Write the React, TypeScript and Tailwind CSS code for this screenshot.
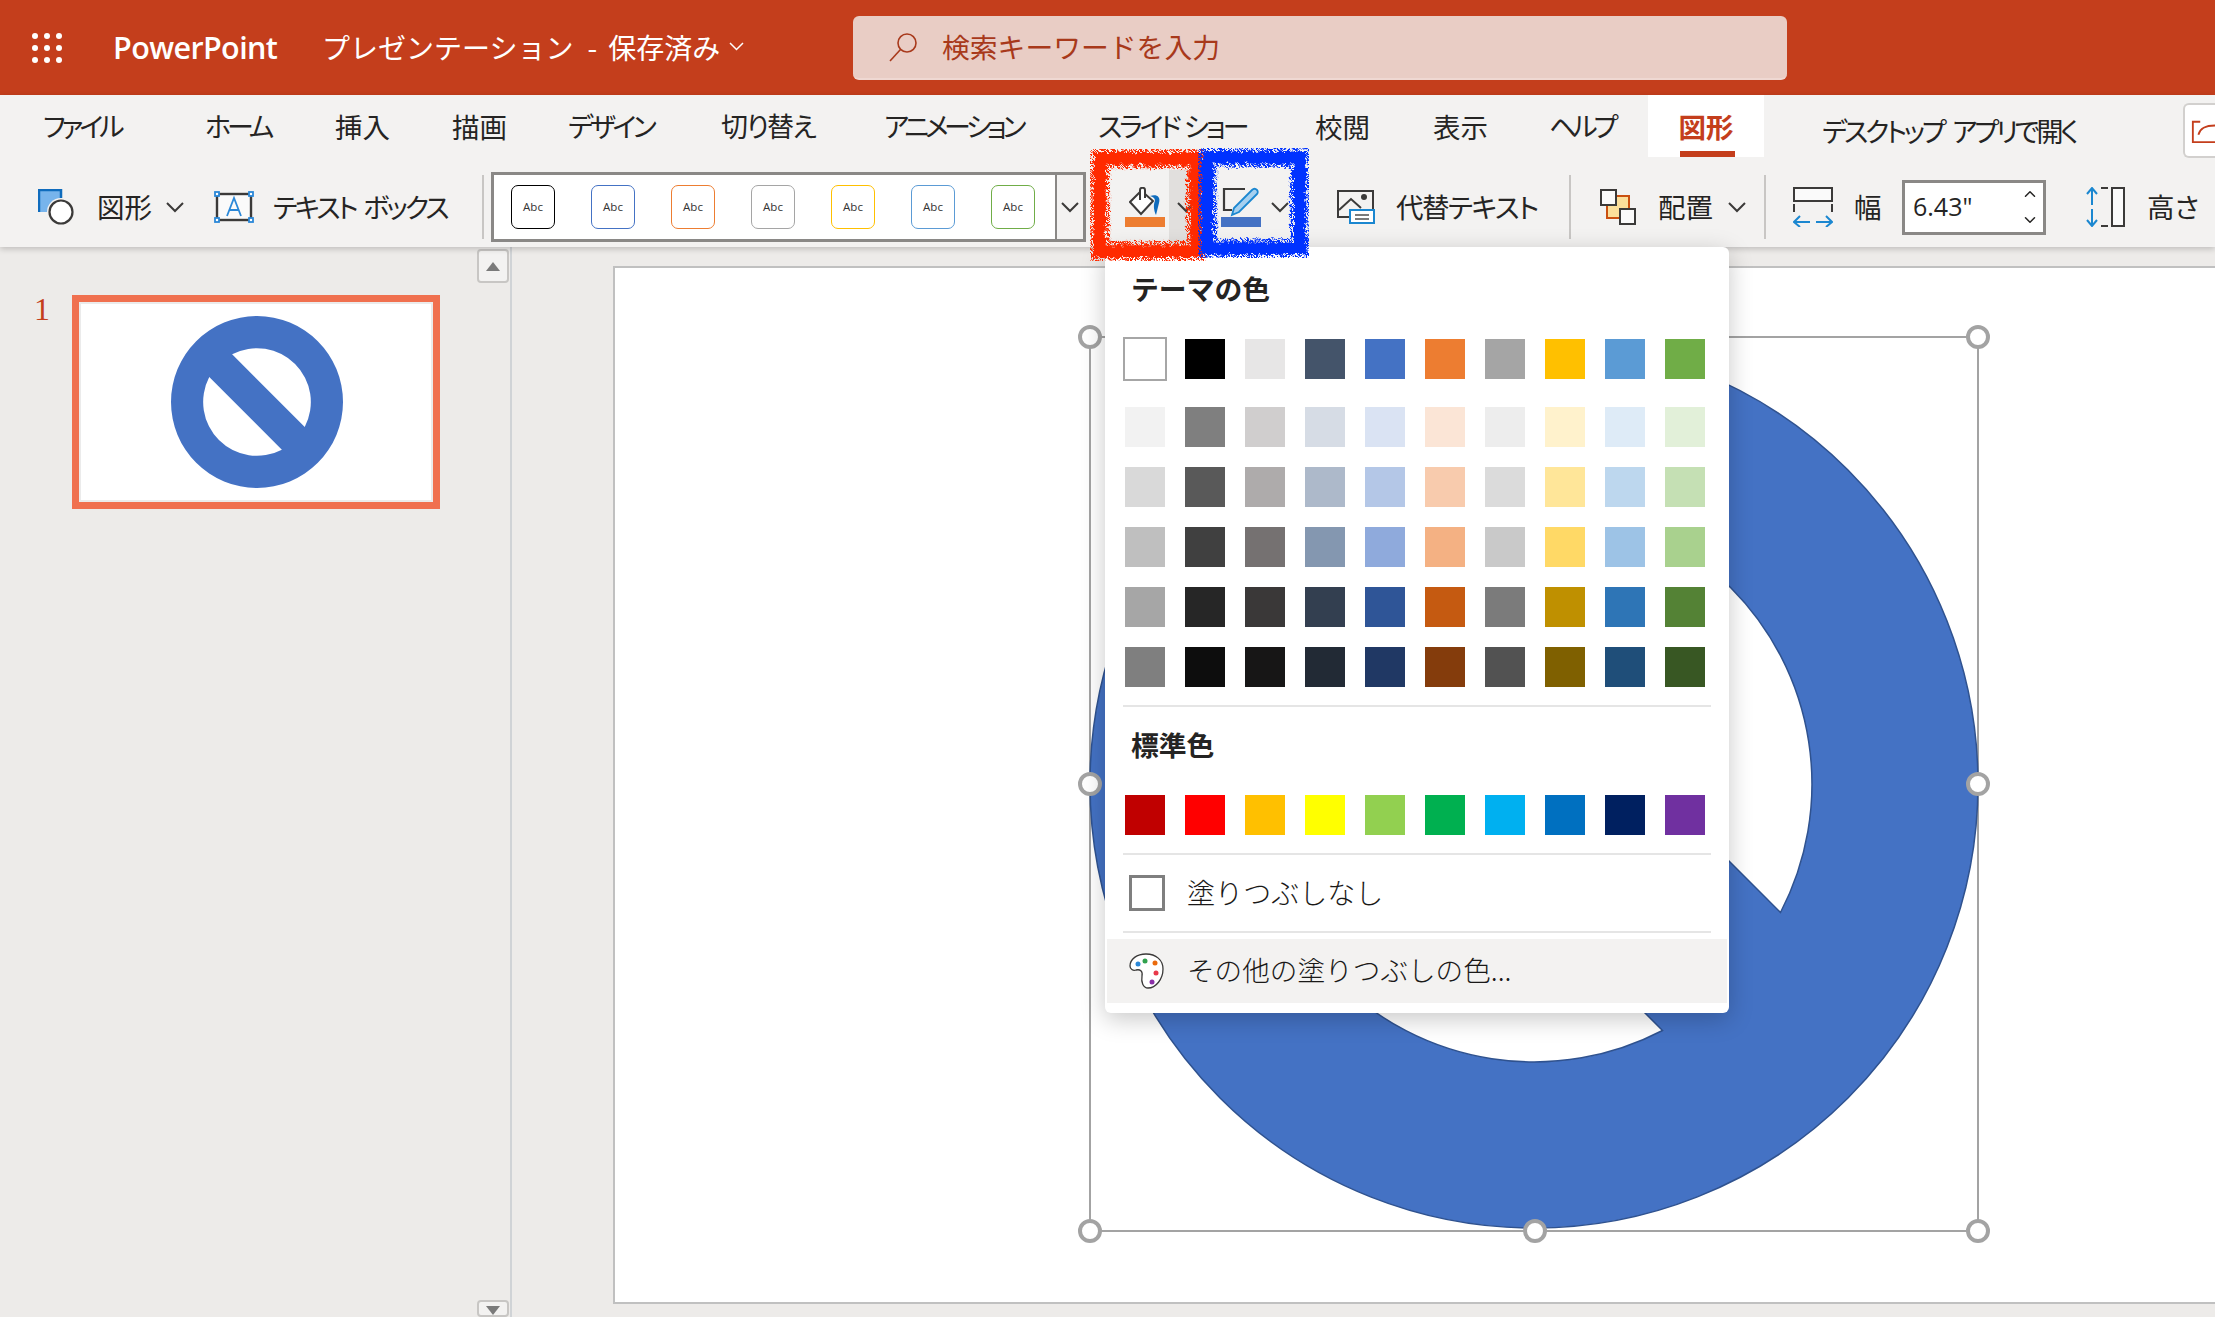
import { ChevronDown, ChevronUp } from "lucide-react";

const font = "font-['Noto_Sans_CJK_JP','Noto_Sans',sans-serif]";

const tabs = [
  { label: "ファイル", cls: "w-[162px] text-[27px] tracking-[-4px]" },
  { label: "ホーム", cls: "w-[130px] text-[27px] tracking-[-4px]" },
  { label: "挿入", cls: "w-[117px] text-[27.5px]" },
  { label: "描画", cls: "w-[116px] text-[27.5px]" },
  { label: "デザイン", cls: "w-[153px] text-[27px] tracking-[-3.4px]" },
  { label: "切り替え", cls: "w-[163px] text-[27px] tracking-[-1.7px]" },
  { label: "アニメーション", cls: "w-[214px] text-[27px] tracking-[-4.3px]" },
  { label: "スライド ショー", cls: "w-[217px] text-[27px] tracking-[-3px] [word-spacing:2px]" },
  { label: "校閲", cls: "w-[118px] text-[27.5px]" },
  { label: "表示", cls: "w-[116px] text-[27.5px]" },
  { label: "ヘルプ", cls: "w-[99px] text-[27px] tracking-[-4px]" },
];

const abcColors = [
  "border-black",
  "border-[#4472c4]",
  "border-[#ed7d31]",
  "border-[#a5a5a5]",
  "border-[#ffc000]",
  "border-[#5b9bd5]",
  "border-[#70ad47]",
];

const themeTop = [
  "bg-white",
  "bg-black",
  "bg-[#e7e6e6]",
  "bg-[#44546a]",
  "bg-[#4472c4]",
  "bg-[#ed7d31]",
  "bg-[#a5a5a5]",
  "bg-[#ffc000]",
  "bg-[#5b9bd5]",
  "bg-[#70ad47]",
];

const themeShades = [
  ["bg-[#f2f2f2]", "bg-[#7f7f7f]", "bg-[#d0cece]", "bg-[#d6dce5]", "bg-[#dae3f3]", "bg-[#fbe5d6]", "bg-[#ededed]", "bg-[#fff2cc]", "bg-[#deebf7]", "bg-[#e2f0d9]"],
  ["bg-[#d9d9d9]", "bg-[#595959]", "bg-[#aeabab]", "bg-[#adb9ca]", "bg-[#b4c7e7]", "bg-[#f8cbad]", "bg-[#dbdbdb]", "bg-[#ffe699]", "bg-[#bdd7ee]", "bg-[#c5e0b4]"],
  ["bg-[#bfbfbf]", "bg-[#404040]", "bg-[#757171]", "bg-[#8497b0]", "bg-[#8faadc]", "bg-[#f4b183]", "bg-[#c9c9c9]", "bg-[#ffd966]", "bg-[#9dc3e6]", "bg-[#a9d18e]"],
  ["bg-[#a6a6a6]", "bg-[#262626]", "bg-[#3a3838]", "bg-[#333f50]", "bg-[#2f5597]", "bg-[#c55a11]", "bg-[#7b7b7b]", "bg-[#bf9000]", "bg-[#2e75b6]", "bg-[#548235]"],
  ["bg-[#7f7f7f]", "bg-[#0d0d0d]", "bg-[#171616]", "bg-[#222a35]", "bg-[#203864]", "bg-[#843c0c]", "bg-[#525252]", "bg-[#7f6000]", "bg-[#1f4e79]", "bg-[#385723]"],
];

const standard = [
  "bg-[#c00000]",
  "bg-[#ff0000]",
  "bg-[#ffc000]",
  "bg-[#ffff00]",
  "bg-[#92d050]",
  "bg-[#00b050]",
  "bg-[#00b0f0]",
  "bg-[#0070c0]",
  "bg-[#002060]",
  "bg-[#7030a0]",
];

function Chevron({ className = "" }: { className?: string }) {
  return (
    <svg className={`h-[11px] w-[18px] shrink-0 ${className}`} viewBox="0 0 18 11" fill="none" stroke="#3b3a39" strokeWidth="2">
      <path d="M1 1l8 8 8-8" />
    </svg>
  );
}

function Swatches({ colors, first }: { colors: string[]; first?: boolean }) {
  return (
    <div className="flex gap-5">
      {colors.map((c, i) => (
        <div key={i} className={`h-10 w-10 ${c} ${first && i === 0 ? "outline-2 outline-[#a6a6a6]" : ""}`} />
      ))}
    </div>
  );
}

function NoSymbol() {
  return (
    <path
      fillRule="evenodd"
      d="M-444 0A444 444 0 1 1 444 0A444 444 0 1 1 -444 0ZM-128.5 -246.5A278 278 0 0 1 246.5 128.5ZM-246.5 -128.5A278 278 0 0 0 128.5 246.5Z"
    />
  );
}

// marker pen frame: a solid core plus a speckled, torn outer band
function Scribble({ className, color, id }: { className: string; color: string; id: string }) {
  return (
    <svg className={`absolute ${className}`} viewBox="0 0 120 116" preserveAspectRatio="none">
      <filter id={`${id}a`} x="-10%" y="-10%" width="120%" height="120%">
        <feTurbulence type="fractalNoise" baseFrequency="0.22" numOctaves="2" seed="4" />
        <feDisplacementMap in="SourceGraphic" scale="8" />
      </filter>
      <filter id={`${id}b`} x="-10%" y="-10%" width="120%" height="120%">
        <feTurbulence type="fractalNoise" baseFrequency="0.45" numOctaves="2" seed="9" result="n" />
        <feColorMatrix in="n" type="matrix" values="0 0 0 0 0 0 0 0 0 0 0 0 0 0 0 0 0 0 14 -6.4" result="m" />
        <feComposite in="SourceGraphic" in2="m" operator="in" result="s" />
        <feDisplacementMap in="s" in2="n" scale="6" />
      </filter>
      <rect x="11" y="11" width="98" height="94" fill="none" stroke={color} strokeWidth="21" filter={`url(#${id}b)`} />
      <rect x="11" y="11" width="98" height="94" fill="none" stroke={color} strokeWidth="12" filter={`url(#${id}a)`} />
    </svg>
  );
}

function Handle({ className }: { className: string }) {
  return <div className={`absolute h-[24px] w-[24px] rounded-full border-[4px] border-[#a3a3a3] bg-white ${className}`} />;
}

export default function App() {
  return (
    <div className={`relative flex h-[1317px] w-[2215px] flex-col overflow-hidden bg-[#edebe9] text-[#252423] ${font}`}>
      {/* title bar */}
      <header className="flex h-[95px] shrink-0 items-center bg-[#c43e1c] text-white">
        <div className="ml-[32px] grid w-[30px] grid-cols-3 gap-x-[6px] gap-y-[6px]">
          {Array.from({ length: 9 }).map((_, i) => (
            <span key={i} className="h-[6px] w-[6px] rounded-full bg-white" />
          ))}
        </div>
        <div className="ml-[51px] w-[209px] font-['Open_Sans',sans-serif] text-[30.5px] font-semibold tracking-[-0.6px]">PowerPoint</div>
        <div className="flex w-[531px] -translate-y-px items-center text-[28px]">
          <span>プレゼンテーション</span>
          <span className="ml-[14px]">-</span>
          <span className="ml-[11px]">保存済み</span>
          <svg className="ml-[9px] h-[9px] w-[15px]" viewBox="0 0 15 9" fill="none" stroke="#fff" strokeWidth="1.5">
            <path d="M1 1l6.500 6.500L14 1" />
          </svg>
        </div>
        <div className="flex h-[64px] w-[934px] items-center rounded-md border-b-2 border-[#efd8d2] bg-[#e9cdc5] pl-[34px] text-[27.8px] text-[#a8391b]">
          <svg className="h-[32px] w-[32px]" viewBox="0 0 32 32" fill="none" stroke="#a8391b" strokeWidth="1.6">
            <circle cx="20" cy="12" r="9" />
            <path d="M13.5 18.5 3 30" />
          </svg>
          <span className="ml-[23px]">検索キーワードを入力</span>
        </div>
      </header>

      {/* ribbon */}
      <div className="z-10 h-[152px] shrink-0 bg-[#f3f2f1] shadow-[0_2px_6px_rgba(0,0,0,0.2)] [font-feature-settings:'palt']">
        <div className="flex h-[62px]">
          <div className="flex pl-[43px]">
            {tabs.map((t) => (
              <div key={t.label} className={`whitespace-nowrap pt-[11px] ${t.cls}`}>
                {t.label}
              </div>
            ))}
          </div>
          <div className="relative flex w-[116px] justify-center bg-white pt-[11px] text-[27.5px] font-bold text-[#c43e1c]">
            図形
            <span className="absolute bottom-0 left-[32px] h-[6px] w-[55px] bg-[#c43e1c]" />
          </div>
          <div className="ml-[58px] w-[361px] whitespace-nowrap pt-[16px] text-[27px] tracking-[-3.2px] [word-spacing:6px]">デスクトップ アプリで開く</div>
          <div className="mt-[8px] flex h-[55px] w-[32px] items-center rounded-l-md border-2 border-r-0 border-[#d2d0ce] bg-white pl-[6px]">
            <svg className="h-[28px] w-[26px]" viewBox="0 0 26 28" fill="none" stroke="#c43e1c" strokeWidth="2">
              <path d="M10 4H2v22h24" />
              <path d="M8 18c2-7 7-10 18-10" />
            </svg>
          </div>
        </div>

        <div className="flex h-[90px] items-center pt-[10px] text-[27.5px]">
          <svg className="ml-[38px] h-[36px] w-[36px]" viewBox="0 0 36 36">
            <rect x="1" y="1" width="22" height="22" fill="#77b4ec" />
            <path d="M1 23V1h22v8" fill="none" stroke="#0f6cbd" strokeWidth="2.5" />
            <circle cx="23" cy="23" r="14" fill="#f3f2f1" />
            <circle cx="23" cy="23" r="11.500" fill="#fff" stroke="#3b3a39" strokeWidth="2.200" />
          </svg>
          <span className="ml-[23px] w-[55px] whitespace-nowrap">図形</span>
          <Chevron className="ml-[14px]" />
          <svg className="ml-[30px] h-[32px] w-[40px]" viewBox="0 0 40 32" fill="none">
            <rect x="3" y="3" width="34" height="26" fill="#fafafa" stroke="#3b3a39" strokeWidth="2.400" />
            <path d="M13 25 20 7l7 18M15.500 19h9" stroke="#2b88d8" strokeWidth="1.800" />
            {[[3, 3], [37, 3], [3, 29], [37, 29]].map(([x, y]) => (
              <rect key={`${x}-${y}`} x={x - 2} y={y - 2} width="4" height="4" fill="#fff" stroke="#2b88d8" strokeWidth="1.800" />
            ))}
          </svg>
          <span className="ml-[19px] w-[209px] whitespace-nowrap text-[27px] tracking-[-2.8px] [word-spacing:4px]">テキスト ボックス</span>
          <div className="h-[64px] w-[2px] bg-[#c8c6c4]" />

          {/* style gallery */}
          <div className="ml-[7px] flex h-[70px] w-[595px] border-[3px] border-[#8a8886]">
            <div className="flex w-[561px] items-center gap-[36px] bg-white pl-[17px]">
              {abcColors.map((c) => (
                <div key={c} className={`flex h-[44px] w-[44px] items-center justify-center rounded-[7px] border-[1.5px] ${c} font-['Open_Sans',sans-serif] text-[11.5px] font-medium text-[#333]`}>
                  Abc
                </div>
              ))}
            </div>
            <div className="flex flex-1 items-center justify-center border-l-2 border-[#8a8886]">
              <Chevron className="w-[17px]" />
            </div>
          </div>

          {/* fill */}
          <div className="ml-[39px] flex h-[40px] w-[40px] shrink-0 flex-col items-center">
            <svg className="h-[30px] w-[32px]" viewBox="0 0 32 30" fill="none">
              <path d="M11 5 1 15l11 12 12-13-8-7" fill="#fff" stroke="#3b3a39" strokeWidth="2" />
              <path d="M11 13V3c0-3 5-3 5 0v8" fill="#fff" stroke="#3b3a39" strokeWidth="2" />
              <path d="M21 9c6-2 11 0 9 7-1 4-2 8-3 12-2-4-3-10-1-14 0-3-2-4-5-5Z" fill="#0f6cbd" />
            </svg>
            <div className="h-[10px] w-[40px] bg-[#ed7d31]" />
          </div>
          <div className="ml-[4px] flex h-[74px] w-[24px] shrink-0 items-center justify-end bg-[#e1dfdd]">
            <Chevron className="-mr-[2px]" />
          </div>
          <div className="ml-[28px] flex h-[40px] w-[40px] shrink-0 flex-col items-center">
            <svg className="h-[30px] w-[40px]" viewBox="0 0 40 30" fill="none">
              <path d="M24 2H3v21h8" stroke="#3b3a39" strokeWidth="2.200" />
              <path d="M31 3c2-2 4-1 5 0s1 3 0 4L18 25l-7 3 2-7Z" fill="#a6d0ef" stroke="#1b87d0" strokeWidth="1.800" />
            </svg>
            <div className="h-[10px] w-[40px] bg-[#4472c4]" />
          </div>
          <Chevron className="ml-[10px]" />

          <svg className="ml-[48px] h-[34px] w-[38px]" viewBox="0 0 38 34" fill="none">
            <path d="M12 27H1V1h35v20" stroke="#3b3a39" strokeWidth="2" />
            <path d="M2 20 14 9l10 9" stroke="#3b3a39" strokeWidth="2" />
            <circle cx="27" cy="7" r="3" fill="#3b3a39" />
            <rect x="13" y="20" width="24" height="13" fill="#fff" stroke="#1b87d0" strokeWidth="2" />
            <path d="M18 25h14M18 29h14" stroke="#7a7a7a" strokeWidth="2" />
          </svg>
          <span className="ml-[21px] w-[173px] whitespace-nowrap tracking-[-1.5px]">代替テキスト</span>
          <div className="h-[64px] w-[2px] bg-[#c8c6c4]" />

          <svg className="ml-[29px] h-[36px] w-[36px]" viewBox="0 0 36 36" fill="none">
            <rect x="7" y="7" width="22" height="22" fill="#fbdf9a" stroke="#ca5010" strokeWidth="2" />
            <rect x="1" y="1" width="15" height="15" fill="#fafafa" stroke="#3b3a39" strokeWidth="2" />
            <rect x="20" y="20" width="15" height="15" fill="#fafafa" stroke="#3b3a39" strokeWidth="2" />
          </svg>
          <span className="ml-[22px] w-[56px] whitespace-nowrap">配置</span>
          <Chevron className="ml-[14px]" />
          <div className="ml-[18px] h-[64px] w-[2px] bg-[#c8c6c4]" />

          <svg className="ml-[27px] h-[40px] w-[40px]" viewBox="0 0 40 40" fill="none">
            <rect x="1" y="1" width="38" height="13" fill="#fafafa" stroke="#3b3a39" strokeWidth="2" />
            <path d="M1 17v8M39 17v8" stroke="#3b3a39" strokeWidth="2" />
            <path d="M1 35h16M7 29l-6 6 6 5M23 35h16M33 29l6 6-6 5" stroke="#1b87d0" strokeWidth="2" />
          </svg>
          <span className="ml-[21px] w-[27px]">幅</span>
          <div className="ml-[21px] flex h-[55px] w-[144px] shrink-0 items-center justify-between border-[3px] border-[#8a8886] bg-white pl-[8px] pr-[4px] font-['Open_Sans',sans-serif] text-[25px]">
            6.43"
            <div className="flex flex-col gap-[8px]">
              <ChevronUp className="h-[18px] w-[18px]" />
              <ChevronDown className="h-[18px] w-[18px]" />
            </div>
          </div>
          <svg className="ml-[40px] h-[40px] w-[40px]" viewBox="0 0 40 40" fill="none">
            <path d="M6 1v17M1 7l5-6 5 6M6 22v17M1 33l5 6 5-6" stroke="#1b87d0" strokeWidth="2" />
            <rect x="26" y="1" width="12" height="38" fill="#fafafa" stroke="#3b3a39" strokeWidth="2" />
            <path d="M15 1h7M15 39h7" stroke="#3b3a39" strokeWidth="2" />
          </svg>
          <span className="ml-[21px] whitespace-nowrap">高さ</span>
        </div>
      </div>

      {/* workspace */}
      <div className="flex min-h-0 flex-1">
        <aside className="flex w-[512px] shrink-0 border-r-2 border-[#d0d3d6]">
          <div className="flex flex-1 items-start pl-[34px] pt-[48px]">
            <span className="w-[38px] font-['Liberation_Serif',serif] text-[32px] leading-[28px] text-[#c43e1c]">1</span>
            <div className="flex h-[214px] w-[368px] items-center justify-center border-[7px] border-[#f0704f] bg-white pl-px outline-2 -outline-offset-[9px] outline-[#ebebeb]">
              <svg className="h-[172px] w-[172px] fill-[#4472c4]" viewBox="-444 -444 888 888">
                <NoSymbol />
              </svg>
            </div>
          </div>
          <div className="mr-px flex w-[32px] flex-col justify-between pt-[2px]">
            <div className="flex h-[34px] items-center justify-center rounded-sm border-2 border-[#c8c6c4] bg-[#f3f2f1]">
              <span className="h-0 w-0 border-x-[7px] border-b-[9px] border-x-transparent border-b-[#7a7a7a]" />
            </div>
            <div className="flex h-[17px] items-start justify-center rounded-sm border-2 border-[#c8c6c4] bg-[#f3f2f1] pt-[4px]">
              <span className="h-0 w-0 border-x-[7px] border-t-[9px] border-x-transparent border-t-[#7a7a7a]" />
            </div>
          </div>
        </aside>
        <main className="min-w-0 flex-1 pl-[101px] pt-[19px]">
          <div className="relative h-[1038px] w-[1700px] border-2 border-[#c0c0c0] bg-white">
            {/* slide shape and its selection frame */}
            <div className="absolute left-[474px] top-[68px] h-[896px] w-[890px] border-2 border-[#a3a3a3]">
              <svg className="absolute -left-[2px] -top-[2px] h-[896px] w-[890px] fill-[#4472c4] stroke-[#2f528f] stroke-[1.5]" viewBox="-445 -448 890 896" preserveAspectRatio="none">
                <NoSymbol />
              </svg>
              <Handle className="-left-[13px] -top-[13px]" />
              <Handle className="-right-[13px] -top-[13px]" />
              <Handle className="-left-[13px] top-[434px]" />
              <Handle className="-right-[13px] top-[434px]" />
              <Handle className="-left-[13px] -bottom-[13px]" />
              <Handle className="left-[432px] -bottom-[13px]" />
              <Handle className="-right-[13px] -bottom-[13px]" />
            </div>
          </div>
        </main>
      </div>

      {/* fill colour menu */}
      <div className="absolute left-[1105px] top-[247px] z-20 h-[766px] w-[624px] rounded-md bg-white shadow-[0_6px_24px_rgba(0,0,0,0.22)]">
        <div className="pl-[26px] pt-[21px] text-[27.8px] font-bold leading-[40px]">テーマの色</div>
        <div className="pl-[20px] pt-[31px]">
          <Swatches colors={themeTop} first />
          <div className="mt-7 flex flex-col gap-5">
            {themeShades.map((row, i) => (
              <Swatches key={i} colors={row} />
            ))}
          </div>
        </div>
        <div className="mx-[18px] mt-[18px] h-[2px] bg-[#e5e5e5]" />
        <div className="pl-[26px] pt-[17px] text-[27.8px] font-bold leading-[40px]">標準色</div>
        <div className="pl-[20px] pt-[31px]">
          <Swatches colors={standard} />
        </div>
        <div className="mx-[18px] mt-[18px] h-[2px] bg-[#e5e5e5]" />
        <div className="flex h-[76px] items-center pl-[24px] text-[28px] font-light text-[#1a1918]">
          <div className="h-[36px] w-[36px] border-[3px] border-[#7f7f7f]" />
          <span className="ml-[22px] -translate-y-px">塗りつぶしなし</span>
        </div>
        <div className="mx-[18px] h-[2px] bg-[#e5e5e5]" />
        <div className="mx-[2px] mt-[6px] flex h-[64px] items-center bg-[#f3f2f1] pl-[22px] text-[27.6px] font-light text-[#1a1918]">
          <svg className="h-[36px] w-[36px]" viewBox="0 0 36 36" fill="none">
            <path d="M17 1C8 1 1 6 1 13c0 3 3 5 6 4 4-1 7 1 6 6-1 6 1 12 6 12 8 0 15-9 15-19C34 7 27 1 17 1Z" fill="#fff" stroke="#3b3a39" strokeWidth="1.300" />
            <circle cx="9" cy="11" r="2.500" fill="#2b88d8" />
            <circle cx="16" cy="8" r="2.500" fill="#30a14e" />
            <circle cx="26" cy="10" r="2.500" fill="#ea6a0c" />
            <circle cx="27" cy="20" r="2.500" fill="#e8394a" />
            <circle cx="23" cy="29" r="2.500" fill="#8b2fa8" />
          </svg>
          <span className="ml-[22px] -translate-y-px">その他の塗りつぶしの色...</span>
        </div>
      </div>

      {/* red and blue marker annotations */}
      <Scribble className="left-[1089px] top-[148px] z-30 h-[114px] w-[118px]" color="#ff2a00" id="redMark" />
      <Scribble className="left-[1197px] top-[147px] z-30 h-[112px] w-[113px]" color="#0033ff" id="blueMark" />
    </div>
  );
}
